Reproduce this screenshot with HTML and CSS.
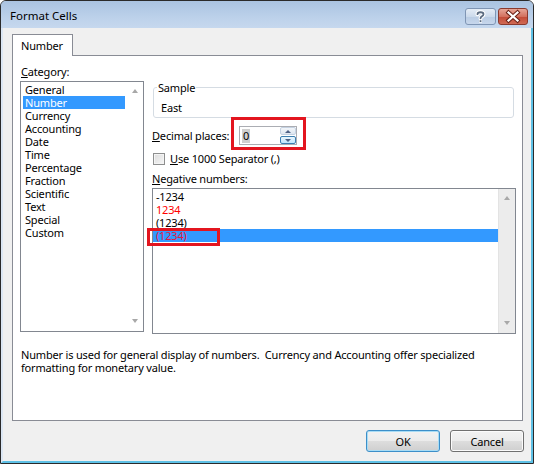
FILE: index.html
```html
<!DOCTYPE html>
<html>
<head>
<meta charset="utf-8">
<link rel="stylesheet" href="styles.css">
</head>
<body>
<div class="window">
  <div class="titlebar">
    <span class="title">Format Cells</span>
    <div class="caption-btns">
      <span class="cbtn help"><svg width="31" height="17" viewBox="0 0 31 17"><path d="M12.5 6.2 C12.5 3.6 18.5 3.6 18.5 6.2 C18.5 8.3 15.5 8.3 15.5 10.3" fill="none" stroke="#fff" stroke-width="4" stroke-linecap="round"/><path d="M12.5 6.2 C12.5 3.6 18.5 3.6 18.5 6.2 C18.5 8.3 15.5 8.3 15.5 10.3" fill="none" stroke="#5b6b80" stroke-width="1.8" stroke-linecap="round"/><rect x="14" y="11.6" width="3" height="3" fill="#fff"/><rect x="14.6" y="12.2" width="1.8" height="1.8" fill="#5b6b80"/></svg></span>
      <span class="cbtn close"><svg width="30" height="17" viewBox="0 0 30 17"><path d="M10.5 4.5 L19.5 12.5 M19.5 4.5 L10.5 12.5" stroke="#6a2218" stroke-width="4.2" stroke-linecap="square"/><path d="M10.5 4.5 L19.5 12.5 M19.5 4.5 L10.5 12.5" stroke="#fff" stroke-width="2.2" stroke-linecap="square"/></svg></span>
    </div>
  </div>
  <div class="client">
    <div class="tabs"><span class="tab">Number</span></div>
    <div class="panel">
      <div class="cols">
        <div class="left">
          <div class="lbl"><u>C</u>ategory:</div>
          <div class="listbox cat">
            <ul class="items">
              <li>General</li>
              <li class="sel">Number</li>
              <li>Currency</li>
              <li>Accounting</li>
              <li>Date</li>
              <li>Time</li>
              <li>Percentage</li>
              <li>Fraction</li>
              <li>Scientific</li>
              <li>Text</li>
              <li>Special</li>
              <li>Custom</li>
            </ul>
            <div class="vscroll white"><span class="arr up"></span><span class="arr down"></span></div>
          </div>
        </div>
        <div class="right">
          <fieldset class="group">
            <legend>Sample</legend>
            <div class="sample">East</div>
          </fieldset>
          <div class="row dec">
            <span class="dlbl"><u>D</u>ecimal places:</span>
            <span class="spin">
              <span class="spin-text"><span class="selt">0</span></span>
              <span class="spin-btns">
                <span class="sb sb-up"><span class="tri up"></span></span>
                <span class="sb sb-down"><span class="tri down"></span></span>
              </span>
              <span class="mark mark-spin"></span>
            </span>
          </div>
          <div class="row chk">
            <span class="checkbox"></span>
            <span class="clbl"><u>U</u>se 1000 Separator (,)</span>
          </div>
          <div class="lbl neglbl"><u>N</u>egative numbers:</div>
          <div class="listbox neg">
            <ul class="items">
              <li>-1234</li>
              <li class="red">1234</li>
              <li>(1234)</li>
              <li class="sel red-sel">(1234)<span class="mark mark-row"></span></li>
            </ul>
            <div class="vscroll gray"><span class="arr up"></span><span class="arr down"></span></div>
          </div>
        </div>
      </div>
      <p class="desc">Number is used for general display of numbers.&nbsp; Currency and Accounting offer specialized<br>formatting for monetary value.</p>
    </div>
    <div class="buttons">
      <button class="btn default">OK</button>
      <button class="btn">Cancel</button>
    </div>
  </div>
</div>
</body>
</html>
```

FILE: styles.css
```css
* { box-sizing: border-box; }
html, body { margin: 0; padding: 0; background: #fff; }
body {
  font-family: "Noto Sans", "Open Sans", sans-serif;
  font-size: 11px;
  line-height: 13px;
  letter-spacing: -0.18px;
  color: #000;
}
u { text-decoration: underline; text-underline-offset: 1px; }

.window {
  width: 534px;
  height: 464px;
  border: 1px solid #2a2a2a;
  border-radius: 6px 6px 0 0;
  background: #c3d5ec;
  display: flex;
  flex-direction: column;
  overflow: hidden;
}

.titlebar {
  height: 27px;
  flex: none;
  display: flex;
  align-items: flex-start;
  background: linear-gradient(#aac3e1, #bcd1ea 60%, #c6d8ee);
  padding: 0 5px 0 9px;
}
.title {
  flex: 1;
  padding-top: 8px;
  font-size: 11.5px;
  letter-spacing: 0;
}
.caption-btns {
  display: flex;
  gap: 2px;
  margin-top: 7px;
}
.cbtn {
  display: block;
  height: 17px;
  border-radius: 3px;
}
.cbtn svg { display: block; }
.help {
  width: 31px;
  border: 1px solid #7f95b4;
  background: linear-gradient(#e4ecf6, #ccdaeb 50%, #b9cce3 51%, #c7d7ec);
}
.help svg { margin: -1px; }
.close {
  width: 30px;
  border: 1px solid #8b3a2e;
  background: linear-gradient(#e6a596, #d3715f 50%, #c34a36 51%, #cf6a55);
}
.close svg { margin: -1px; }

.client {
  flex: 1;
  background: #f0f0f0;
  border-left: 2px solid #dce7f4;
  border-right: 2px solid #5ec1e6;
  border-bottom: 2px solid #5ec1e6;
  padding: 6px 8px 0 9px;
  display: flex;
  flex-direction: column;
}

.tabs {
  display: flex;
  height: 22px;
  margin-bottom: -1px;
  position: relative;
  z-index: 1;
}
.tab {
  display: block;
  width: 61px;
  height: 22px;
  background: #fff;
  border: 1px solid #898c95;
  border-bottom: none;
  padding: 4px 0 0 8px;
}

.panel {
  height: 366px;
  background: #fff;
  border: 1px solid #898c95;
  padding: 9px 6px 0 7px;
}

.cols { display: flex; gap: 8px; }
.left { width: 124px; flex: none; }
.right { flex: 1; margin-top: 16px; }

.lbl { height: 13px; padding-left: 1px; }

.listbox {
  border: 1px solid #828790;
  background: #fff;
  display: flex;
}
.cat { height: 251px; margin-top: 3px; }
.neg { height: 146px; margin-top: 3px; }

.items {
  list-style: none;
  margin: 0;
  flex: 1;
}
.cat .items { padding: 1px 1px 0 2px; }
.neg .items { padding: 1px 0 0 0; }
.items li {
  height: 13px;
  padding-left: 2px;
  white-space: nowrap;
}
.neg .items li { padding-left: 3px; }
.items li.sel { background: #3399ff; color: #fff; }
.items li.red { color: #ff0000; }
.items li.red-sel { color: #e5173f; position: relative; }

.vscroll {
  width: 17px;
  flex: none;
  display: flex;
  flex-direction: column;
  justify-content: space-between;
  align-items: center;
  padding: 7px 0 8px;
}
.vscroll.white { background: #fff; }
.vscroll.gray {
  background: #ececec;
  border-left: 1px solid #e3e3e3;
}
.arr {
  width: 0;
  height: 0;
  border-left: 3.5px solid transparent;
  border-right: 3.5px solid transparent;
}
.arr.up { border-bottom: 4px solid #a8a8a8; }
.arr.down { border-top: 4px solid #a8a8a8; }

.group {
  margin: 0 2px 0 1px;
  padding: 7px 8px 3px 7px;
  border: 1px solid #d5dce3;
  border-radius: 3px;
  min-width: 0;
}
.group legend {
  padding: 0 1px;
  margin-left: -4px;
  line-height: 13px;
}
.sample { height: 13px; }

.row { display: flex; align-items: center; }
.dec { margin-top: 8px; height: 19px; }
.dlbl { width: 87px; flex: none; }
.spin {
  position: relative;
  width: 58px;
  height: 19px;
  border: 1px solid #abadb3;
  background: #fff;
  display: flex;
}
.spin-text {
  flex: 1;
  padding: 2px 0 0 2px;
}
.selt {
  display: inline-block;
  background: #cfcfcf;
  padding: 0 1px 0 1px;
  height: 14px;
  line-height: 14px;
}
.spin-btns {
  width: 16px;
  display: flex;
  flex-direction: column;
  gap: 1px;
}
.sb {
  flex: 1;
  display: flex;
  align-items: center;
  justify-content: center;
  border-radius: 2px;
}
.sb-up {
  border: 1px solid #c5d2e1;
  background: linear-gradient(#f3f6fa, #dde6f0);
}
.sb-down {
  border: 1px solid #3c7fb1;
  background: linear-gradient(#eaf6fd, #bee6fd);
}
.tri {
  width: 0;
  height: 0;
  border-left: 3px solid transparent;
  border-right: 3px solid transparent;
}
.tri.up { border-bottom: 3px solid #4d6185; }
.tri.down { border-top: 3px solid #4d6185; }

.mark {
  position: absolute;
  border: 3px solid #e3151f;
  pointer-events: none;
}
.mark-spin { left: -9px; top: -10px; width: 75px; height: 33px; }
.mark-row { left: -6px; top: -1px; width: 73px; height: 18px; }

.chk { margin-top: 6px; height: 15px; }
.checkbox {
  width: 12px;
  height: 12px;
  margin-left: 1px;
  border: 1px solid #8e8f8f;
  background: linear-gradient(135deg, #dcdcdc, #f6f6f6);
  box-shadow: inset 0 0 0 1px #f4f4f4;
}
.clbl { margin-left: 5px; }

.neglbl { margin-top: 6px; padding-left: 0; }

.desc {
  margin: 14px 0 0 0;
  padding-left: 1px;
  white-space: nowrap;
}

.buttons {
  display: flex;
  justify-content: flex-end;
  gap: 10px;
  margin-top: 9px;
  margin-right: -1px;
}
.btn {
  width: 74px;
  height: 22px;
  font: inherit;
  letter-spacing: inherit;
  color: #000;
  border: 1px solid #707070;
  border-radius: 3px;
  background: linear-gradient(#f2f2f2, #ebebeb 50%, #dddddd 51%, #cfcfcf);
  box-shadow: inset 0 0 0 1px #fbfbfb;
  padding: 0;
}
.btn.default {
  border-color: #3c8fc9;
  box-shadow: inset 0 0 0 1px #a8dcf5;
}
```
